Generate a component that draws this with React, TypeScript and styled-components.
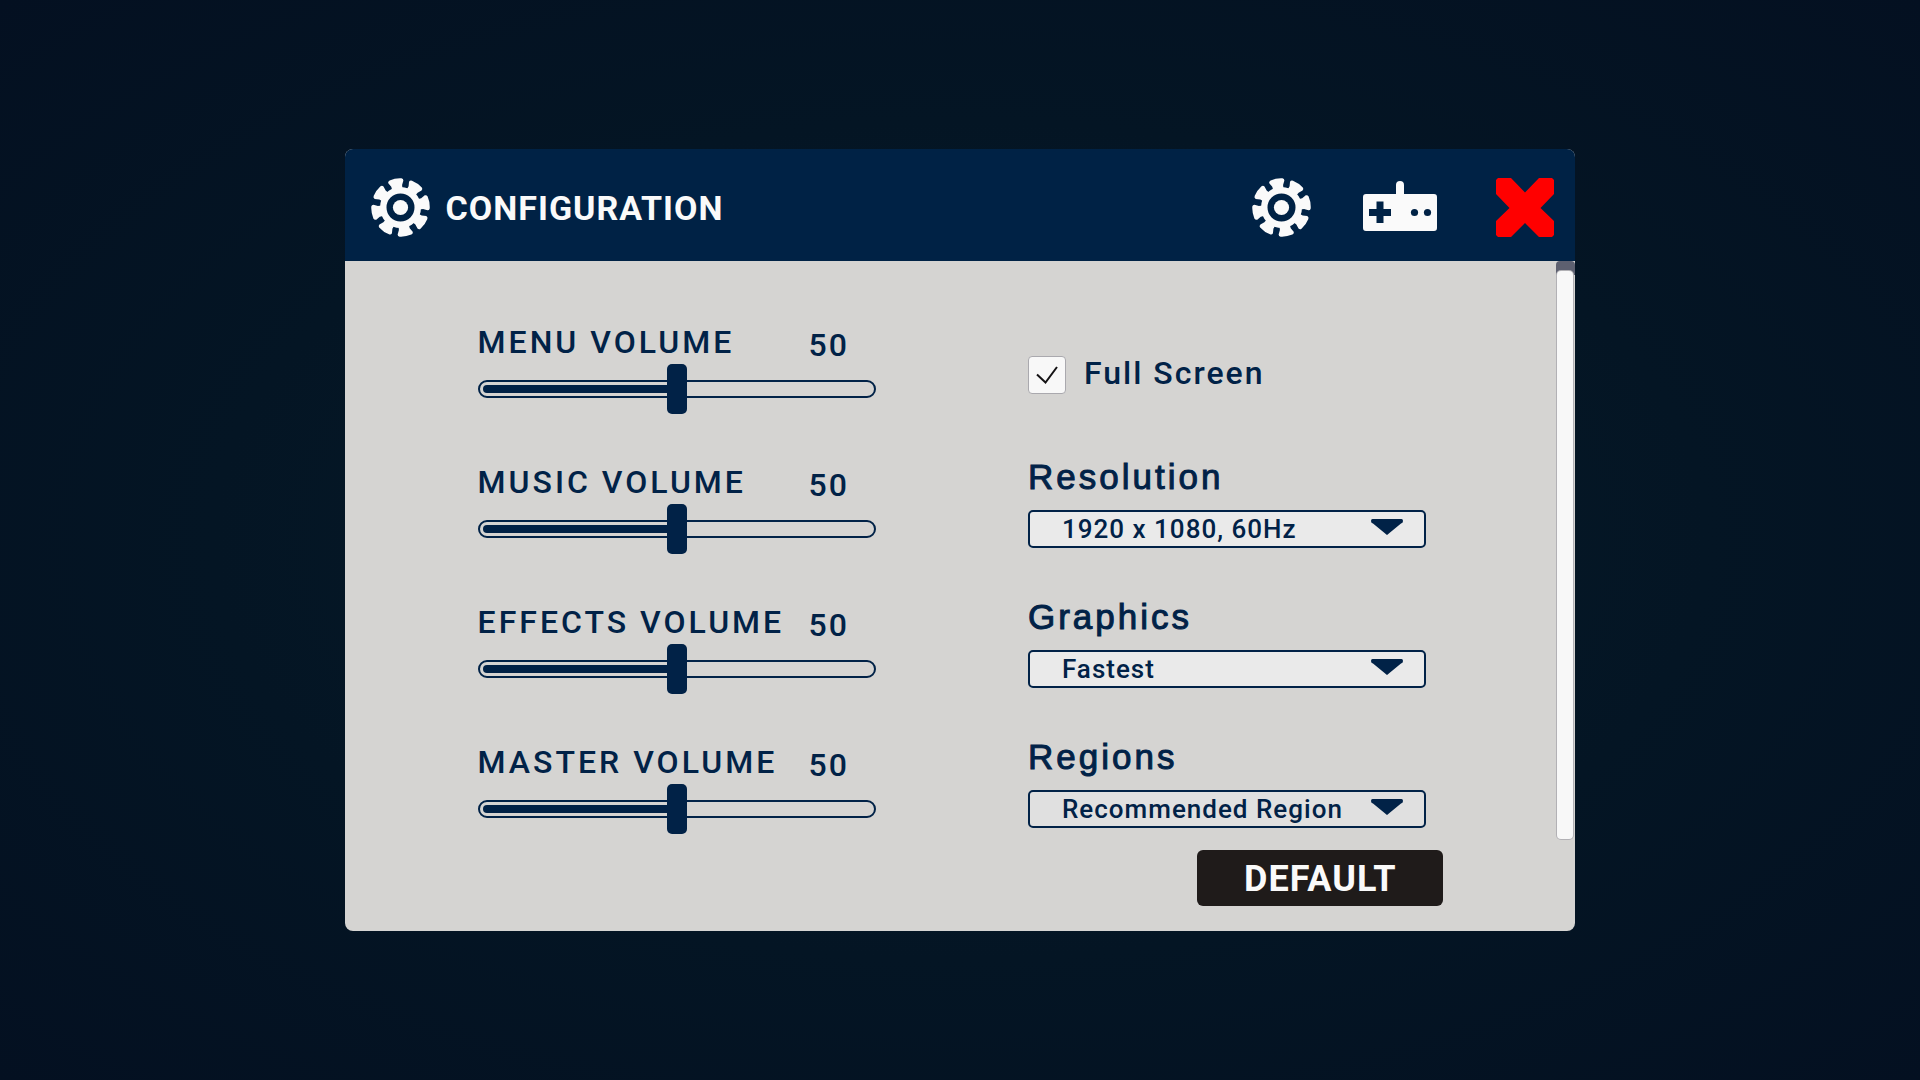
import React, { useId, useState } from 'react';
import styled, { createGlobalStyle } from 'styled-components';

const navy = '#012247';
const rounded = "Roboto, 'Liberation Sans', sans-serif";

const GlobalStyle = createGlobalStyle`
  *, *::before, *::after { box-sizing: border-box; }
  body { margin: 0; background: #041120; }
`;

const Screen = styled.main`
  min-height: 100vh;
  display: flex;
  align-items: center;
  justify-content: center;
  background: radial-gradient(ellipse at center, #061c2a 0%, #041524 55%, #041021 100%);
  color: ${navy};
  font-family: ${rounded};
`;

const Panel = styled.section`
  width: calc(64% + 2px);
  min-width: 960px;
  border-radius: 8px;
  overflow: hidden;
  background: #d5d4d2;
`;

const Header = styled.header`
  display: flex;
  align-items: center;
  gap: 16px;
  padding: 29px 21px 24px 26px;
  background: #002245;
  color: #fafafa;
`;

const Title = styled.h1`
  margin: 0;
  font-size: 34px;
  line-height: 40px;
  font-weight: 700;
  letter-spacing: 1px;
`;

const Tabs = styled.nav`
  display: flex;
  align-items: center;
  gap: 52px;
  margin-left: auto;
`;

const IconButton = styled.button<{ $color?: string }>`
  display: flex;
  padding: 0;
  border: 0;
  background: none;
  color: ${({ $color }) => $color ?? 'inherit'};
  cursor: pointer;
`;

const CloseButton = styled(IconButton)`
  margin-left: 43px;
`;

const Body = styled.div`
  display: flex;
`;

const Settings = styled.div`
  flex: 1;
  display: grid;
  grid-template-columns: 1fr 1fr;
  column-gap: 152px;
  padding: 61px 130px 5px 133px;
`;

const Volumes = styled.div`
  display: flex;
  flex-direction: column;
  gap: 48px;
`;

const LabelRow = styled.div`
  display: flex;
  align-items: flex-end;
  justify-content: space-between;
  padding: 0 27px 2px 0;
  font-size: 32px;
  font-weight: 500;
`;

const VolumeLabel = styled.label`
  line-height: 40px;
  letter-spacing: 3px;
  white-space: nowrap;
`;

const VolumeValue = styled.output`
  line-height: 34px;
  letter-spacing: 2px;
`;

const SliderBox = styled.div`
  display: grid;
  align-items: center;
  height: 50px;
  > * { grid-area: 1 / 1; }
`;

const Track = styled.div`
  height: 18px;
  padding: 3px;
  border: 2px solid ${navy};
  border-radius: 9px;
`;

const Fill = styled.div`
  height: 8px;
  border-radius: 4px;
  background: ${navy};
`;

const Range = styled.input`
  appearance: none;
  width: 100%;
  height: 50px;
  margin: 0;
  background: none;
  cursor: pointer;

  &::-webkit-slider-thumb {
    appearance: none;
    width: 20px;
    height: 50px;
    border-radius: 5px;
    background: ${navy};
  }
`;

const Options = styled.div`
  display: flex;
  flex-direction: column;
  gap: 48px;
  padding-top: 34px;
`;

const CheckRow = styled.label`
  display: flex;
  align-items: center;
  gap: 18px;
  height: 38px;
  margin-bottom: 14px;
  font-size: 32px;
  font-weight: 500;
  letter-spacing: 2px;
  white-space: nowrap;
`;

const CheckText = styled.span`
  padding-bottom: 4px;
`;

const CheckBox = styled.span`
  display: grid;
  place-items: center;
  width: 38px;
  height: 38px;
  > * { grid-area: 1 / 1; }
  svg { pointer-events: none; }
  input:not(:checked) + svg { visibility: hidden; }
`;

const CheckInput = styled.input`
  appearance: none;
  width: 38px;
  height: 38px;
  margin: 0;
  border: 1px solid #aaa9ae;
  border-radius: 4px;
  background: #f8f8f8;
`;

const Field = styled.div`
  display: flex;
  flex-direction: column;
  gap: 12px;
`;

const FieldLabel = styled.label`
  font-family: 'Liberation Sans', sans-serif;
  font-size: 35px;
  line-height: 42px;
  letter-spacing: 3px;
  -webkit-text-stroke: 1px ${navy};
`;

const SelectBox = styled.div`
  display: grid;
  align-items: center;
  > * { grid-area: 1 / 1; }
  svg {
    justify-self: end;
    margin: 0 23px 4px 0;
    pointer-events: none;
  }
`;

const Select = styled.select<{ $muted?: boolean }>`
  appearance: none;
  width: 100%;
  height: 38px;
  padding: 0 60px 0 32px;
  border: 2px solid ${navy};
  border-radius: 5px;
  background: ${({ $muted }) => ($muted ? '#e0e0e0' : '#eaeaea')};
  color: ${navy};
  font-family: ${rounded};
  font-size: 26px;
  font-weight: 500;
  line-height: 34px;
  letter-spacing: 1px;
`;

const ScrollTrack = styled.div`
  width: 19px;
  padding: 10px 2px 0 1px;
  border-radius: 4px;
  background: linear-gradient(#5d6070 14px, #d5d4d2 14px);
`;

const ScrollThumb = styled.div`
  height: 100%;
  border-radius: 4px;
  background: #f8f8f8;
  box-shadow: 0 0 0 1px #b2b1b5;
`;

const Footer = styled.footer`
  display: flex;
  justify-content: flex-end;
  padding: 11px 132px 25px;
`;

const DefaultButton = styled.button`
  width: 246px;
  height: 56px;
  padding: 2px 0 0;
  border: 0;
  border-radius: 6px;
  background: #1f1b1a;
  color: #fafafa;
  font-family: ${rounded};
  font-size: 36px;
  font-weight: 700;
  letter-spacing: 1px;
  cursor: pointer;
`;

const teeth = [0, 45, 90, 135, 180, 225, 270, 315];

function GearIcon() {
  return (
    <svg width="59" height="59" viewBox="-29.5 -29.5 59 59" fill="currentColor" aria-hidden="true">
      <g transform="rotate(-10)">
        {teeth.map((angle) => (
          <path
            key={angle}
            transform={`rotate(${angle})`}
            d="M-5-16 L-5.500-22 L-7.800-26 Q-8-28-6-28.600 Q0-30 6-28.600 Q7.800-28 7.500-26 L5.500-22 L5-16Z"
          />
        ))}
      </g>
      <circle r="17.250" fill="none" stroke="currentColor" strokeWidth="6.500" />
      <circle r="7.600" />
    </svg>
  );
}

function GamepadIcon() {
  return (
    <svg width="74" height="54" viewBox="0 0 74 54" aria-hidden="true">
      <path
        fill="currentColor"
        fillRule="evenodd"
        d="M33 13V4Q33 0 37 0T41 4V13H71Q74 13 74 16V47Q74 50 71 50H3Q0 50 0 47V16Q0 13 3 13ZM13.500 20.500V28H6V35H13.500V42H20.500V35H28V28H20.500V20.500Z"
      />
      <circle cx="51.500" cy="31.500" r="3.600" fill="#002245" />
      <circle cx="64.500" cy="31.500" r="3.600" fill="#002245" />
    </svg>
  );
}

function CloseIcon() {
  return (
    <svg width="58" height="59" viewBox="0 0 58 59" fill="currentColor" aria-hidden="true">
      <path d="M2 0H15L29 14.500L43 0H56L58 2V16L44.500 30L58 43V57L56 59H43L29 45L15 59H2L0 57V43L13.500 30L0 16V2Z" />
    </svg>
  );
}

function VolumeField({ name }: { name: string }) {
  const id = useId();
  const [value, setValue] = useState(50);
  return (
    <div>
      <LabelRow>
        <VolumeLabel htmlFor={id}>{name}</VolumeLabel>
        <VolumeValue htmlFor={id}>{value}</VolumeValue>
      </LabelRow>
      <SliderBox>
        <Track>
          <Fill style={{ width: `${value}%` }} />
        </Track>
        <Range
          id={id}
          type="range"
          min={0}
          max={100}
          value={value}
          onChange={(e) => setValue(Number(e.target.value))}
        />
      </SliderBox>
    </div>
  );
}

function SelectField({ name, options, muted }: { name: string; options: string[]; muted?: boolean }) {
  const id = useId();
  return (
    <Field>
      <FieldLabel htmlFor={id}>{name}</FieldLabel>
      <SelectBox>
        <Select id={id} $muted={muted}>
          {options.map((option) => (
            <option key={option}>{option}</option>
          ))}
        </Select>
        <svg width="32" height="16" viewBox="0 0 32 16" fill={navy} aria-hidden="true">
          <path d="M1.500 0H30.500Q32 0 32 2T30 4.500L16 16L2 4.500Q0 4 0 2T1.500 0Z" />
        </svg>
      </SelectBox>
    </Field>
  );
}

export default function App() {
  const [fullScreen, setFullScreen] = useState(true);
  return (
    <>
      <GlobalStyle />
      <Screen>
        <Panel>
          <Header>
            <GearIcon />
            <Title>CONFIGURATION</Title>
            <Tabs>
              <IconButton type="button" aria-label="General">
                <GearIcon />
              </IconButton>
              <IconButton type="button" aria-label="Controls">
                <GamepadIcon />
              </IconButton>
            </Tabs>
            <CloseButton type="button" aria-label="Close" $color="#ff0000">
              <CloseIcon />
            </CloseButton>
          </Header>
          <Body>
            <Settings>
              <Volumes>
                <VolumeField name="MENU VOLUME" />
                <VolumeField name="MUSIC VOLUME" />
                <VolumeField name="EFFECTS VOLUME" />
                <VolumeField name="MASTER VOLUME" />
              </Volumes>
              <Options>
                <CheckRow>
                  <CheckBox>
                    <CheckInput
                      type="checkbox"
                      checked={fullScreen}
                      onChange={(e) => setFullScreen(e.target.checked)}
                    />
                    <svg width="22" height="18" viewBox="0 0 22 18" fill="none" stroke="#141214" strokeWidth="2" aria-hidden="true">
                      <path d="M1 8.500L9.500 16.500L21 1" />
                    </svg>
                  </CheckBox>
                  <CheckText>Full Screen</CheckText>
                </CheckRow>
                <SelectField name="Resolution" options={['1920 x 1080, 60Hz']} />
                <SelectField name="Graphics" options={['Fastest']} />
                <SelectField name="Regions" options={['Recommended Region']} muted />
              </Options>
            </Settings>
            <ScrollTrack>
              <ScrollThumb />
            </ScrollTrack>
          </Body>
          <Footer>
            <DefaultButton type="button">DEFAULT</DefaultButton>
          </Footer>
        </Panel>
      </Screen>
    </>
  );
}
